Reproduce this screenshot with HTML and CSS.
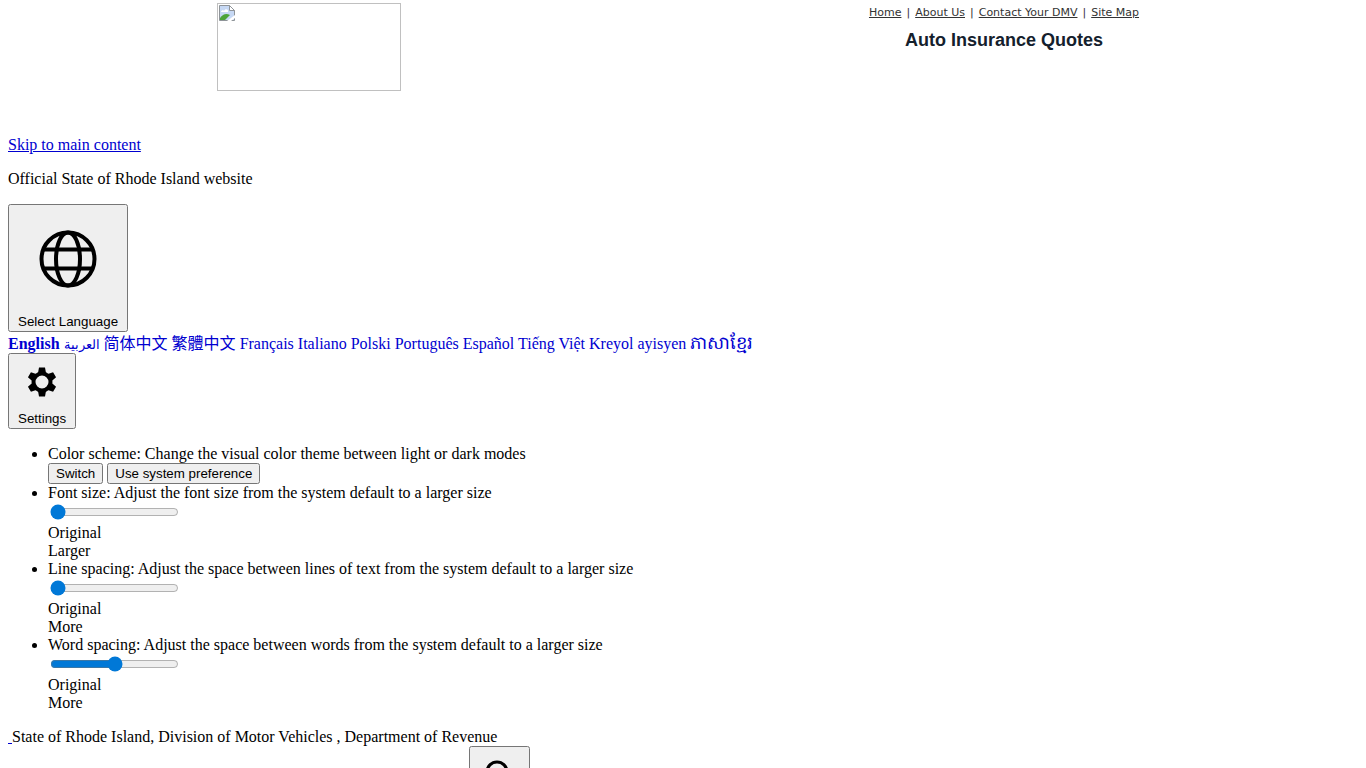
FILE: index.html
```html
<!DOCTYPE html>
<html lang="en">
<head>
    <meta charset="UTF-8">
    <meta name="viewport" content="width=device-width, initial-scale=1.0">
    <title>Division of Motor Vehicles</title>
    <link rel="stylesheet" href="styles.css">
</head>
<body>
    <header class="top">
        <a class="logo" href="#" aria-label="Home">
            <svg width="16" height="16" viewBox="0 0 16 16">
                <path d="M.5 .5h10l5 5v10H.5z" fill="#c6d8f4" stroke="#8f9499"/>
                <path d="M2 7c0-2 3-2 3-1 1-3 5-2 4 1z" fill="#fff"/>
                <path d="M1 15v-2c3-4 6-5 10-3l-5 5z" fill="#4da439"/>
                <path d="M10.5 .5v5h5z" fill="#fff" stroke="#8f9499"/>
                <path d="M8 16l8-6v3l-4 3z" fill="#fff"/>
            </svg>
        </a>
        <div class="top-right">
            <nav class="top-links">
                <a href="#">Home</a>
                <span>|</span>
                <a href="#">About Us</a>
                <span>|</span>
                <a href="#">Contact Your DMV</a>
                <span>|</span>
                <a href="#">Site Map</a>
            </nav>
            <h2>Auto Insurance Quotes</h2>
        </div>
    </header>

    <main class="page">
        <a href="#menu">Skip to main content</a>
        <p>Official State of Rhode Island website</p>

        <button type="button" class="icon-button language">
            <svg width="60" height="60" viewBox="0 0 60 60" fill="none" stroke="#000" stroke-width="4">
                <circle cx="30" cy="30" r="26.500"/>
                <ellipse cx="30" cy="30" rx="12" ry="26.500"/>
                <path d="M5 20.500h50M5 39.500h50"/>
            </svg>
            <span>Select Language</span>
        </button>
        <div class="languages">
            <a href="#" class="current">English</a>
            <a href="#" lang="ar">العربية</a>
            <a href="#" lang="zh-Hans">简体中文</a>
            <a href="#" lang="zh-Hant">繁體中文</a>
            <a href="#">Français</a>
            <a href="#">Italiano</a>
            <a href="#">Polski</a>
            <a href="#">Português</a>
            <a href="#">Español</a>
            <a href="#">Tiếng Việt</a>
            <a href="#">Kreyol ayisyen</a>
            <a href="#" lang="km">ភាសាខ្មែរ</a>
        </div>

        <button type="button" class="icon-button settings">
            <svg width="36" height="36" viewBox="0 0 36 36">
                <g transform="translate(18 18)">
                    <circle r="8.500" fill="none" stroke="#000" stroke-width="4"/>
                    <path d="M-4-9l1-5.500h6l1 5.500zM-4 9l1 5.500h6l1-5.500z"/>
                    <path transform="rotate(60)" d="M-4-9l1-5.500h6l1 5.500zM-4 9l1 5.500h6l1-5.500z"/>
                    <path transform="rotate(120)" d="M-4-9l1-5.500h6l1 5.500zM-4 9l1 5.500h6l1-5.500z"/>
                </g>
            </svg>
            <span>Settings</span>
        </button>

        <ul id="menu">
            <li>
                Color scheme: Change the visual color theme between light or dark modes
                <div class="scheme">
                    <button type="button">Switch</button>
                    <button type="button">Use system preference</button>
                </div>
            </li>
            <li>
                <label for="fontSize">Font size: Adjust the font size from the system default to a larger size</label>
                <div class="slider"><input type="range" id="fontSize" min="0" max="100" value="0"></div>
                <div>Original</div>
                <div>Larger</div>
            </li>
            <li>
                <label for="lineSpacing">Line spacing: Adjust the space between lines of text from the system default to a larger size</label>
                <div class="slider"><input type="range" id="lineSpacing" min="0" max="100" value="0"></div>
                <div>Original</div>
                <div>More</div>
            </li>
            <li>
                <label for="wordSpacing">Word spacing: Adjust the space between words from the system default to a larger size</label>
                <div class="slider"><input type="range" id="wordSpacing" min="0" max="100" value="50"></div>
                <div>Original</div>
                <div>More</div>
            </li>
        </ul>

        <div><a href="#">&nbsp;</a>State of Rhode Island, Division of Motor Vehicles , Department of Revenue</div>
        <div class="search">
            <button type="button" class="icon-button" aria-label="Search">
                <svg width="37" height="36" viewBox="0 0 37 36" fill="none" stroke="#000" stroke-width="3">
                    <circle cx="16" cy="16" r="10"/>
                    <path d="M23 23l9 9"/>
                </svg>
            </button>
        </div>
    </main>
</body>
</html>
```

FILE: styles.css
```css
body {
    margin: 0;
    background: #fff;
    color: #000;
    font-family: "Liberation Serif", "Noto Sans CJK SC", serif;
    font-size: 16px;
    line-height: 18px;
}
a {
    color: #0000d0;
}
.top {
    display: flex;
    justify-content: space-between;
    max-width: 932px;
    min-height: 133px;
    margin: 0 auto;
    padding-top: 3px;
}
.logo {
    box-sizing: border-box;
    width: 184px;
    height: 88px;
    padding: 1px;
    border: 1px solid #c0c0c0;
}
.logo svg {
    display: block;
}
.top-right {
    width: 290px;
    padding-top: 1px;
    text-align: center;
}
.top-links {
    display: flex;
    justify-content: center;
    gap: 5px;
    font-family: "DejaVu Sans", sans-serif;
    font-size: 11px;
    color: #333;
}
.top-links a {
    color: #333;
}
.top h2 {
    margin: 8px 0 0;
    font-family: "Liberation Sans", sans-serif;
    font-size: 18px;
    line-height: 20px;
    color: #14202c;
}
.page {
    padding: 0 8px;
}
p {
    margin: 16px 0;
}
button {
    font-family: "Liberation Sans", sans-serif;
}
input {
    accent-color: #0078d7;
}
.icon-button {
    display: flex;
    flex-direction: column;
    align-items: center;
    padding: 0 8px;
}
.language {
    padding: 23px 8px 1px;
}
.language svg {
    margin-bottom: 25px;
}
.settings {
    padding: 9px 8px 1px;
}
.settings svg {
    margin-bottom: 11px;
}
.languages {
    height: 20px;
    padding-top: 1px;
}
.languages a {
    text-decoration: none;
}
.languages .current {
    font-weight: bold;
}
[lang="ar"] {
    font-size: 13px;
}
[lang="zh-Hant"] {
    font-family: "Noto Sans CJK TC", sans-serif;
}
[lang="km"] {
    font-size: 18px;
}
ul {
    margin: 16px 0;
    padding-left: 40px;
}
.scheme {
    display: flex;
    gap: 4px;
}
.slider {
    height: 22px;
}
.slider input {
    margin: 2px;
}
.search {
    padding-left: 461px;
}
.search .icon-button {
    padding: 8px 10px;
}
```
